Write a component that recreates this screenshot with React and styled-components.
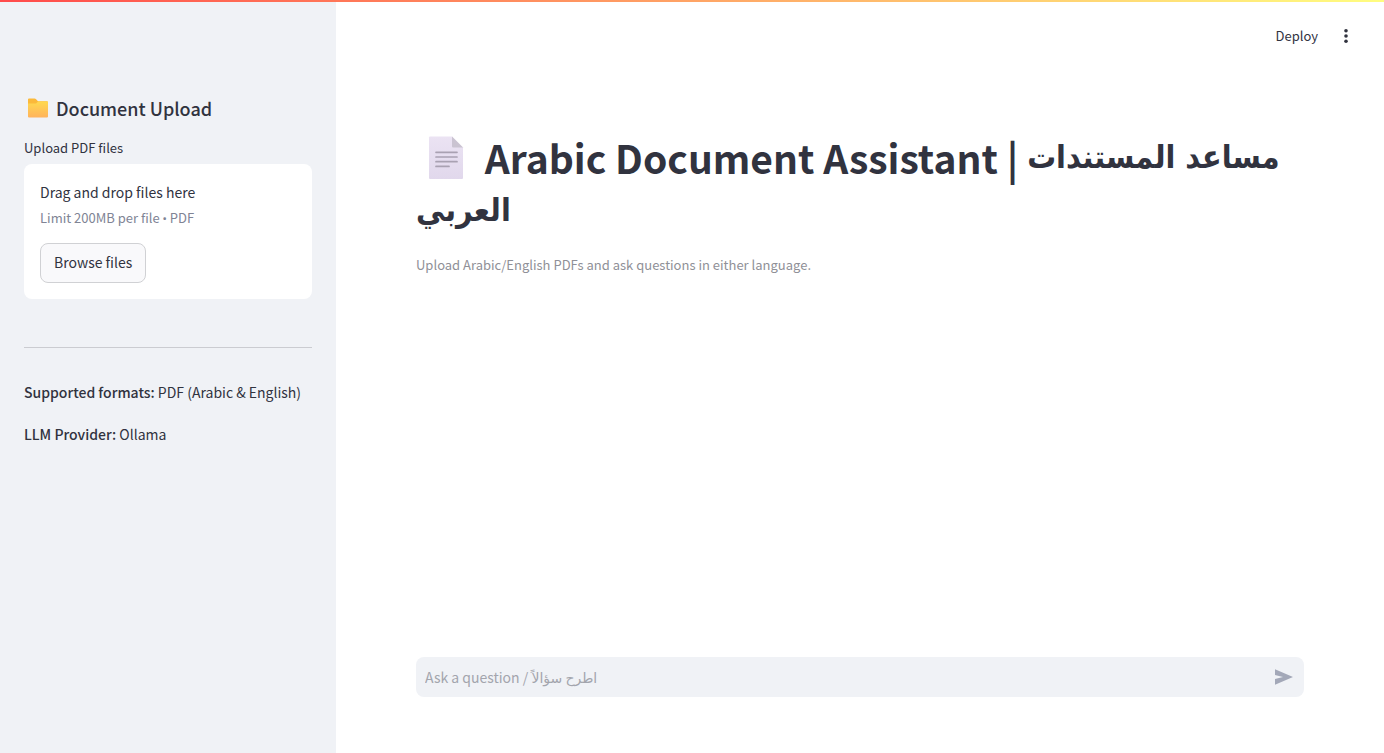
import React, { useRef } from "react";
import styled, { createGlobalStyle } from "styled-components";

const GlobalStyle = createGlobalStyle`
  * {
    box-sizing: border-box;
  }
  body {
    margin: 0;
    color: #31333f;
    background: #fff;
    font-family: "Noto Sans CJK SC", "DejaVu Sans", sans-serif;
    font-size: 14px;
    line-height: 24px;
  }
  button,
  input {
    font: inherit;
    color: inherit;
  }
`;

const AppLayout = styled.div`
  display: flex;
  min-height: 100vh;
`;

const Decoration = styled.div`
  position: absolute;
  top: 0;
  left: 0;
  right: 0;
  height: 2px;
  background: linear-gradient(90deg, #ff4b4b, #fffd80);
`;

const Sidebar = styled.aside`
  flex: 0 0 336px;
  padding: 96px 24px 24px;
  background: #f0f2f6;
`;

const SidebarHeading = styled.h2`
  display: flex;
  align-items: center;
  gap: 7px;
  margin: 0 0 16px;
  padding-left: 3px;
  font-size: 18px;
  line-height: 24px;
  font-weight: 500;
`;

const UploadLabel = styled.label`
  display: block;
  margin-bottom: 4px;
  font-size: 13px;
`;

const Dropzone = styled.section`
  display: flex;
  flex-direction: column;
  align-items: flex-start;
  padding: 16px;
  border-radius: 8px;
  background: #fff;
`;

const Hint = styled.small`
  margin: 2px 0 13px;
  font-size: 13px;
  color: #808495;
`;

const Bullet = styled.span`
  font-family: Roboto, sans-serif;
  line-height: 1;
`;

const BrowseButton = styled.button`
  height: 40px;
  padding: 0 13px 2px;
  border: 1px solid #d0d1d4;
  border-radius: 8px;
  background: #f9f9fb;
  cursor: pointer;
`;

const Divider = styled.hr`
  height: 1px;
  margin: 48px 0 32px;
  border: 0;
  background: #cbccd1;
`;

const Info = styled.p`
  margin: 0 0 18px;

  strong {
    font-weight: 500;
  }
`;

const Main = styled.main`
  display: flex;
  flex: 1;
  flex-direction: column;
  min-width: 0;
`;

const Toolbar = styled.header`
  display: flex;
  align-items: center;
  justify-content: flex-end;
  gap: 16px;
  height: 72px;
  padding-right: 26px;
`;

const ToolbarButton = styled.button`
  display: flex;
  align-items: center;
  padding: 0;
  border: 0;
  background: none;
  font-size: 13px;
  cursor: pointer;
`;

const Content = styled.div`
  flex: 1;
  padding: 59px 80px 0;
`;

const Title = styled.h1`
  margin: 0 0 16px;
  font-size: 39px;
  line-height: 53px;
  font-weight: 700;

  svg {
    margin: 0 12px;
    vertical-align: -6px;
  }
`;

const Arabic = styled.span`
  font-family: "DejaVu Sans Condensed", "DejaVu Sans", sans-serif;
  font-size: 32px;
  line-height: 1;
  vertical-align: 6px;
`;

const Caption = styled.p`
  margin: 0;
  font-size: 13px;
  color: #8f9097;
`;

const ChatForm = styled.form`
  display: flex;
  align-items: center;
  height: 40px;
  margin: 0 80px 56px;
  padding: 0 8px 0 9px;
  border-radius: 8px;
  background: #f0f2f6;
`;

const ChatInput = styled.input`
  flex: 1;
  min-width: 0;
  padding: 0;
  border: 0;
  outline: 0;
  background: none;

  &::placeholder {
    color: #a3a5ad;
    opacity: 1;
  }
`;

const SendButton = styled.button`
  display: flex;
  padding: 0;
  border: 0;
  background: none;
  color: #a3a8b8;
`;

const FolderIcon = () => (
  <svg width="22" height="20" viewBox="0 0 22 20" aria-hidden="true">
    <defs>
      <linearGradient id="folder" x1="0" y1="0" x2="0" y2="1">
        <stop offset="0" stopColor="#ffd94f" />
        <stop offset="1" stopColor="#ffb35c" />
      </linearGradient>
    </defs>
    <path d="M1 1.5Q1 .5 2 .5h5.5q1 0 1.6.7L11 3.3h9q1 0 1 1V8H1z" fill="#fbb93a" />
    <path d="M1 5.5h7.4q.7 0 1.2-.5l1-1q.5-.5 1.2-.5H20q1 0 1 1v14q0 1-1 1H2q-1 0-1-1z" fill="url(#folder)" />
  </svg>
);

const PageIcon = () => (
  <svg width="36" height="44" viewBox="0 0 36 44" aria-hidden="true">
    <defs>
      <linearGradient id="page" x1="0" y1="0" x2="0" y2="1">
        <stop offset="0" stopColor="#ebe3f3" />
        <stop offset="1" stopColor="#e1d8ec" />
      </linearGradient>
    </defs>
    <path d="M2 .5h22l11 11V42q0 1-1 1H2q-1 0-1-1V1.5q0-1 1-1z" fill="url(#page)" />
    <path d="M24 .5l11 11H25q-1 0-1-1z" fill="#cac3d1" />
    <path d="M8 16.3h21M8 21h21M8 25.7h21M8 30.4h13" stroke="#a9a1b2" strokeWidth="1.7" strokeLinecap="round" />
  </svg>
);

const App = () => {
  const fileRef = useRef(null);

  return (
    <AppLayout>
      <GlobalStyle />
      <Decoration />
      <Sidebar>
        <SidebarHeading>
          <FolderIcon />
          Document Upload
        </SidebarHeading>
        <UploadLabel htmlFor="pdf-files">Upload PDF files</UploadLabel>
        <Dropzone>
          <input id="pdf-files" ref={fileRef} type="file" accept=".pdf" multiple hidden />
          <span>Drag and drop files here</span>
          <Hint>
            Limit 200MB per file <Bullet>•</Bullet> PDF
          </Hint>
          <BrowseButton type="button" onClick={() => fileRef.current.click()}>
            Browse files
          </BrowseButton>
        </Dropzone>
        <Divider />
        <Info>
          <strong>Supported formats:</strong> PDF (Arabic &amp; English)
        </Info>
        <Info>
          <strong>LLM Provider:</strong> Ollama
        </Info>
      </Sidebar>
      <Main>
        <Toolbar>
          <ToolbarButton type="button">Deploy</ToolbarButton>
          <ToolbarButton type="button" aria-label="Main menu">
            <svg width="24" height="24" viewBox="0 0 24 24" fill="currentColor">
              <circle cx="12" cy="6.8" r="1.8" />
              <circle cx="12" cy="12" r="1.8" />
              <circle cx="12" cy="17.2" r="1.8" />
            </svg>
          </ToolbarButton>
        </Toolbar>
        <Content>
          <Title>
            <PageIcon /> Arabic Document Assistant | <Arabic lang="ar">مساعد المستندات</Arabic>{" "}
            <Arabic lang="ar">العربي</Arabic>
          </Title>
          <Caption>Upload Arabic/English PDFs and ask questions in either language.</Caption>
        </Content>
        <ChatForm onSubmit={(e) => e.preventDefault()}>
          <ChatInput type="text" aria-label="Ask a question" placeholder="Ask a question / اطرح سؤالاً" />
          <SendButton type="submit" aria-label="Send message">
            <svg width="24" height="24" viewBox="0 0 24 24" fill="currentColor">
              <path d="M3 4.2v5.9l8 1.9-8 1.9v5.9L21 12z" />
            </svg>
          </SendButton>
        </ChatForm>
      </Main>
    </AppLayout>
  );
};

export default App;
